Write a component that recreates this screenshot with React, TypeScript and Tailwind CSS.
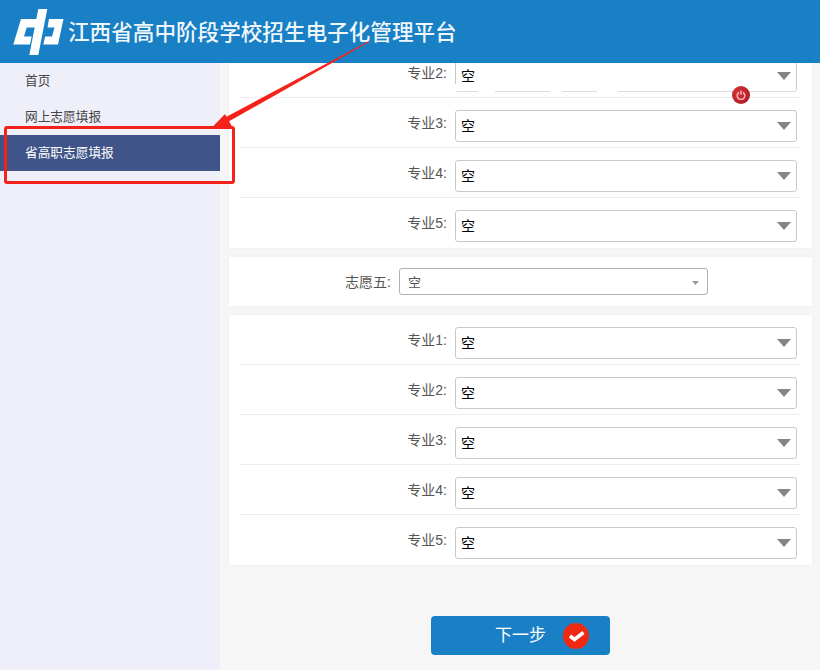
const NAV = ["首页", "网上志愿填报", "省高职志愿填报"];

// gaps in the broken bottom edge left by the screenshot on the clipped row
const GLITCHES = [
  [478, 17], [550, 12], [597, 21],
];

function Caret() {
  return (
    <svg className="absolute right-[5px] top-[11px] h-[8px] w-[14px]" viewBox="0 0 14 8" aria-hidden>
      <path d="M0 0h14L7 8z" fill="#858585" />
    </svg>
  );
}

function MajorRow({ n, last }: { n: number; last?: boolean }) {
  return (
    <div className={`mx-[11px] flex h-[50px] items-start ${last ? "" : "border-b border-[#eeeeee]"}`}>
      <label className="w-[215px] pr-[8px] text-right text-[14px] leading-[50px] text-[#555555]">专业{n}:</label>
      <div className="relative mt-[12px] h-[32px] w-[342px] rounded-[3px] border border-[#c9c9c9] bg-white pl-[5px] text-[14px] leading-[30px] text-black">
        空
        <Caret />
      </div>
    </div>
  );
}

function Logo() {
  return (
    <svg className="h-[63px] w-[68px]" viewBox="0 0 68 63" fill="#ffffff" aria-hidden>
      <path d="M21 19H37l-1.800 8.500H26.700l-2.700 9h7.700l-1.700 8H13.300z" />
      <path d="M38.300 9h9L38.300 55h-9z" />
      <path d="M49 19h14.500L58 44.500H43.300l1.800-8H52l2.500-9H47.500z" />
    </svg>
  );
}

export default function App() {
  return (
    <div className="relative flex h-[670px] flex-col overflow-hidden bg-[#f6f6f6] font-['Liberation_Sans','Noto_Sans_CJK_SC',sans-serif]">
      <header className="flex h-[63px] shrink-0 items-center bg-[#1a80c6]">
        <Logo />
        <h1 className="font-['Noto_Sans_CJK_SC',sans-serif] text-[21.6px] font-medium whitespace-nowrap text-white/95">
          江西省高中阶段学校招生电子化管理平台
        </h1>
      </header>

      <div className="flex flex-1 overflow-hidden">
        <aside className="w-[220px] shrink-0 bg-[#efeffa]">
          {NAV.map((item, i) => (
            <div
              key={item}
              className={`h-[36px] pl-[25px] text-[12.7px] leading-[36px] ${i === 2 ? "bg-[#3f5488] text-white" : "text-[#444444]"}`}
            >
              {item}
            </div>
          ))}
        </aside>

        <main className="flex-1 overflow-hidden pr-[8px] pl-[9px]">
          {/* page is scrolled, so the first row is cut by the header */}
          <div className="-mt-[15px] flex flex-col gap-[9px]">
            <section className="bg-white shadow-[0_0_4px_rgba(0,0,0,0.04)]">
              {[2, 3, 4, 5].map((n) => (
                <MajorRow key={n} n={n} last={n === 5} />
              ))}
            </section>

            <section className="flex h-[49px] items-start bg-white shadow-[0_0_4px_rgba(0,0,0,0.04)]">
              <label className="w-[170px] pr-[8px] text-right text-[14px] leading-[50px] text-[#555555]">志愿五:</label>
              <div className="relative mt-[11px] h-[27px] w-[309px] rounded-[3px] border border-[#b0b0b0] bg-white pl-[8px] text-[13px] leading-[27px] text-[#555555]">
                空
                <svg className="absolute top-[12px] right-[8px] h-[4px] w-[7px]" viewBox="0 0 7 4" aria-hidden>
                  <path d="M0 0h7L3.500 4z" fill="#999999" />
                </svg>
              </div>
            </section>

            <section className="bg-white shadow-[0_0_4px_rgba(0,0,0,0.04)]">
              {[1, 2, 3, 4, 5].map((n) => (
                <MajorRow key={n} n={n} last={n === 5} />
              ))}
            </section>

            <div className="mt-[42px] flex justify-center">
              <button className="flex h-[39px] w-[179px] items-center rounded-[4px] bg-[#1a80c6] pl-[64px] text-[17px] text-white">
                下一步
                <svg className="ml-[17px] h-[26px] w-[26px]" viewBox="0 0 26 26" aria-hidden>
                  <circle cx="13" cy="13" r="13" fill="#f02a12" />
                  <path d="M7 13l4.500 3.500L20.500 9.500" fill="none" stroke="#ffffff" strokeWidth="3.500" />
                </svg>
              </button>
            </div>
          </div>
        </main>
      </div>

      {GLITCHES.map(([x, w]) => (
        <span key={x} className="absolute top-[90px] h-[3px] bg-white" style={{ left: x, width: w }} />
      ))}
      <span className="absolute top-[84px] left-[454px] h-[7px] w-[3px] bg-white" />
      {/* the surviving bits of that edge are washed out */}
      <span className="absolute top-[90px] left-[457px] h-[3px] w-[340px] bg-white/40" />

      {/* power button floating over the form */}
      <div className="absolute top-[86px] left-[732px] flex h-[18px] w-[18px] items-center justify-center rounded-full bg-[radial-gradient(circle_at_35%_35%,#d4343c,#a5161d)]">
        <svg className="h-[10px] w-[10px]" viewBox="0 0 10 10" fill="none" stroke="#f5b5b5" strokeWidth="1.500" aria-hidden>
          <path d="M3 2.500a3.800 3.800 0 1 0 4 0M5 .8v4" />
        </svg>
      </div>

      {/* red annotation drawn on the screenshot */}
      <div className="absolute top-[125.500px] left-[4px] h-[58px] w-[231px] rounded-[3px] border-[3px] border-[#f5221b]" />
      <svg className="absolute top-0 left-0 h-[140px] w-[380px]" viewBox="0 0 380 140" aria-hidden>
        <path d="M368 41.500L226 117l2.500 4.500 1-.5L369 42z" fill="#f5221b" />
        <path d="M212 127.500l13-13.500 7 12.500z" fill="#f5221b" />
      </svg>
    </div>
  );
}
